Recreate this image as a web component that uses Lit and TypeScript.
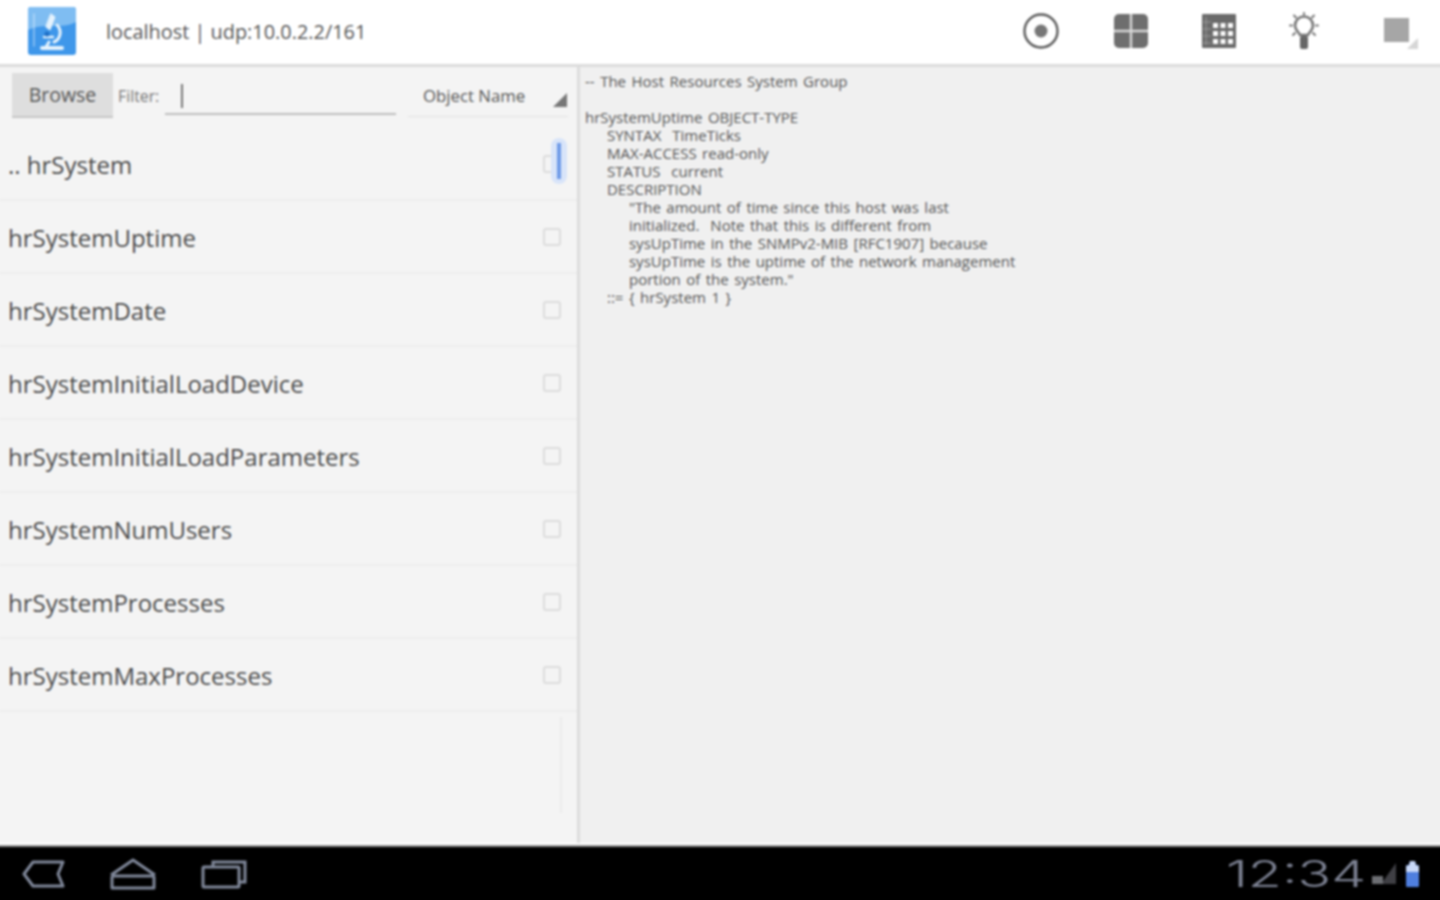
import { LitElement, html, css, svg } from "lit";
import { customElement } from "lit/decorators.js";

const ROWS = [
  ".. hrSystem",
  "hrSystemUptime",
  "hrSystemDate",
  "hrSystemInitialLoadDevice",
  "hrSystemInitialLoadParameters",
  "hrSystemNumUsers",
  "hrSystemProcesses",
  "hrSystemMaxProcesses",
];

const MIB = `-- The Host Resources System Group

hrSystemUptime OBJECT-TYPE
    SYNTAX  TimeTicks
    MAX-ACCESS read-only
    STATUS  current
    DESCRIPTION
        "The amount of time since this host was last
        initialized.  Note that this is different from
        sysUpTime in the SNMPv2-MIB [RFC1907] because
        sysUpTime is the uptime of the network management
        portion of the system."
    ::= { hrSystem 1 }`;

const appIcon = svg`<svg class="logo" width="50" height="50" viewBox="0 0 50 50">
  <rect x="1" y="1" width="48" height="48" rx="3" fill="#3f97ea"/>
  <path d="M1 4a3 3 0 0 1 3-3h42a3 3 0 0 1 3 3v12c-14 8-32 0-48 8z" fill="#7fbdf2"/>
  <g fill="none" stroke="#e6f3fd" stroke-linecap="round">
    <path d="M7 8v32" stroke-width="1.4" opacity=".55"/>
    <path d="M24 8l4 3-5 13-4-3z" fill="#e6f3fd" stroke-width="1"/>
    <path d="M30 19c5 5 4 14-3 17" stroke-width="3"/>
    <path d="M17 31h9" stroke-width="2.4"/>
    <path d="M15 42h20" stroke-width="4"/>
    <path d="M22 36l-3 5" stroke-width="3"/>
  </g>
  <circle cx="20" cy="28" r="2.6" fill="#1f6fc6"/>
</svg>`;

const recordIcon = svg`<svg width="36" height="36" viewBox="0 0 36 36">
  <circle cx="18" cy="18" r="16.5" fill="none" stroke="#5a5a5a" stroke-width="2.4"/>
  <circle cx="18" cy="18" r="6.5" fill="#777"/>
</svg>`;

const gridIcon = svg`<svg class="grid" width="34" height="34" viewBox="0 0 34 34">
  <rect width="34" height="34" rx="5" fill="#6e6e6e"/>
  <path d="M17 0v34M0 17h34" stroke="#d8d8d8" stroke-width="2.4"/>
</svg>`;

const cells: [number, number][] = [];
for (const y of [9, 17, 25]) for (const x of [11, 18.5, 26]) cells.push([x, y]);
const calendarIcon = svg`<svg width="34" height="34" viewBox="0 0 34 34">
  <rect width="34" height="34" rx="1" fill="#6a6a6a"/>
  <path d="M1 8h8M1 15h8M1 22h8M1 29h8M4 3v28" stroke="#9a9a9a" stroke-width="1" fill="none"/>
  ${cells.map(([x, y]) => svg`<rect x=${x} y=${y} width="5" height="5" fill="#fbfbfb"/>`)}
</svg>`;

const bulbIcon = svg`<svg class="bulb" width="30" height="38" viewBox="0 0 30 38">
  <g fill="none" stroke="#777" stroke-linecap="round">
    <path d="M11 23c-1-3-5-4-5-9.500a9 9 0 0 1 18 0c0 5.500-4 6.500-5 9.500z" stroke-width="2.6" stroke-linejoin="round"/>
    <path d="M15 1v1.500M5 3.500l2 2M25 3.500l-2 2M1 13.500H3M29 13.500H27M4 23l2-2M26 23l-2-2" stroke-width="2"/>
  </g>
  <rect x="11" y="24" width="8" height="13" rx="2" fill="#666"/>
</svg>`;

const overviewIcon = svg`<svg width="36" height="36" viewBox="0 0 36 36">
  <rect x="1" y="5" width="25" height="24" fill="#a6a6a6"/>
  <path d="M35 25v11H24z" fill="#d6d6d6"/>
</svg>`;

const backIcon = svg`<svg width="44" height="30" viewBox="0 0 44 30" fill="none" stroke="#80889a" stroke-width="3">
  <path d="M12 3h30l-5 12 5 12H12L3 15z" stroke-linejoin="round"/>
</svg>`;

const homeIcon = svg`<svg width="48" height="32" viewBox="0 0 48 32" fill="none" stroke="#80889a" stroke-width="3">
  <path d="M2 17L24 2l22 15M3 18h42M3 18v12h42V18" stroke-linejoin="round"/>
</svg>`;

const recentIcon = svg`<svg width="46" height="30" viewBox="0 0 46 30" fill="none" stroke="#80889a" stroke-width="3">
  <path d="M12 7V3h32v20h-6" />
  <rect x="2" y="8" width="36" height="20" rx="1"/>
</svg>`;

const signalIcon = svg`<svg width="26" height="21" viewBox="0 0 26 21">
  <path d="M25 0v21H10z" fill="#3f3f44"/>
  <rect x="1" y="13" width="11" height="8" fill="#6d6f74"/>
</svg>`;

const batteryIcon = svg`<svg width="15" height="27" viewBox="0 0 15 27">
  <path d="M5 1h5l1 4h2a1 1 0 0 1 1 1v20a1 1 0 0 1-1 1H2a1 1 0 0 1-1-1V6a1 1 0 0 1 1-1h2z" fill="#4f7fdf"/>
  <path d="M5 1h5l1 4 3 1v6H1V6l3-1z" fill="#c8d8f8"/>
</svg>`;

@customElement("app-root")
export class AppRoot extends LitElement {
  static styles = css`
    :host {
      display: block;
      width: 1440px;
      height: 900px;
      overflow: hidden;
      background: #fff;
    }
    .app {
      display: flex;
      flex-direction: column;
      width: 1448px;
      height: 908px;
      margin: -4px;
      font-family: "Open Sans", "Noto Sans", sans-serif;
      filter: blur(0.8px);
    }
    .top {
      height: 68px;
      flex: none;
      display: flex;
      align-items: center;
      padding: 4px 25px 2px 31px;
      background: #fff;
      box-sizing: border-box;
    }
    .logo { display: block; }
    .title {
      margin-left: 29px;
      font-size: 19.9px;
      color: #555;
      white-space: pre;
    }
    .actions {
      margin-left: auto;
      display: flex;
      align-items: center;
      gap: 54px;
    }
    .actions svg { display: block; }
    .actions .grid { margin-left: 1px; }
    .actions .bulb { margin-left: -1px; }
    .actions .last { margin-left: 10px; }
    .main {
      flex: 1;
      min-height: 0;
      display: flex;
      border-top: 3px solid #dcdcdc;
      border-bottom: 2px solid #fff;
    }
    .left {
      width: 581px;
      box-sizing: border-box;
      padding-left: 4px;
      flex: none;
      background: #f4f4f4;
      position: relative;
    }
    .toolbar {
      height: 61px;
      display: flex;
      align-items: flex-start;
      box-sizing: border-box;
      padding: 6px 0 0 12px;
    }
    .browse {
      width: 101px;
      height: 45px;
      box-sizing: border-box;
      background: #dedede;
      border-bottom: 2px solid #c6c6c6;
      display: flex;
      align-items: center;
      justify-content: center;
      font-size: 19.5px;
      color: #555;
    }
    .filter {
      margin: 12px 0 0 5px;
      width: 47px;
      font-size: 15.8px;
      color: #777;
    }
    .input {
      width: 231px;
      height: 36px;
      box-sizing: border-box;
      border-bottom: 2px solid #bdbdbd;
      padding: 5px 0 0 16px;
      margin-top: 6px;
    }
    .caret { width: 2px; height: 24px; background: #777; }
    .spinner {
      margin: 6px 0 0 12px;
      width: 160px;
      height: 38px;
      box-sizing: border-box;
      border-bottom: 1px solid #e2e2e2;
      position: relative;
      padding: 5px 0 0 15px;
      font-size: 16.8px;
      color: #555;
    }
    .spinner i {
      position: absolute;
      right: 1px;
      bottom: 9px;
      width: 0;
      height: 0;
      border-style: solid;
      border-width: 0 0 14px 14px;
      border-color: transparent transparent #777 transparent;
    }
    .row {
      height: 73px;
      box-sizing: border-box;
      display: flex;
      align-items: center;
      justify-content: space-between;
      padding: 0 16px 0 8px;
      border-bottom: 2px solid #ededed;
      font-size: 24px;
      color: #4a4a4a;
    }
    .label { margin-top: 2px; }
    .check {
      width: 18px;
      height: 18px;
      box-sizing: border-box;
      border: 2px solid #dcdcdc;
      border-radius: 3px;
    }
    .thumb {
      position: absolute;
      left: 555px;
      top: 71px;
      width: 16px;
      height: 46px;
      border-radius: 8px;
      background: #d8e4f9;
    }
    .thumb::after {
      content: "";
      position: absolute;
      left: 6px;
      top: 5px;
      width: 4px;
      height: 36px;
      background: #6f9be8;
    }
    .track {
      position: absolute;
      left: 564px;
      top: 650px;
      bottom: 30px;
      width: 2px;
      background: #ececec;
    }
    .right {
      flex: 1;
      min-width: 0;
      background: #f0f0f0;
      border-left: 3px solid #dcdcdc;
      padding: 5px 0 0 5px;
    }
    pre {
      margin: 0;
      font-family: "Open Sans", "Noto Sans", sans-serif;
      font-size: 15px;
      word-spacing: 1.6px;
      line-height: 18px;
      color: #555;
    }
    .nav {
      height: 59px;
      flex: none;
      background: #000;
      border-top: 2px solid #8e8e8e;
      box-sizing: border-box;
      display: flex;
      align-items: center;
      padding: 0 24px 4px 25px;
    }
    .nav svg { display: block; }
    .keys { display: flex; align-items: center; gap: 44px; }
    .status { margin-left: auto; display: flex; align-items: center; }
    .clock {
      font-family: "Inter", sans-serif;
      font-weight: 300;
      font-size: 37px;
      line-height: 1;
      color: #7c8192;
      width: 135px;
      text-align: left;
      white-space: pre;
      transform: scaleX(1.5);
      transform-origin: left center;
    }
    .signal { margin-left: 10px; }
    .battery { margin-left: 8px; }
  `;

  render() {
    return html`
      <div class="app">
        <div class="top">
          ${appIcon}
          <div class="title">localhost | udp:10.0.2.2/161</div>
          <div class="actions">
            ${recordIcon}${gridIcon}${calendarIcon}${bulbIcon}
            <div class="last">${overviewIcon}</div>
          </div>
        </div>
        <div class="main">
          <div class="left">
            <div class="toolbar">
              <div class="browse">Browse</div>
              <div class="filter">Filter:</div>
              <div class="input"><div class="caret"></div></div>
              <div class="spinner">Object Name<i></i></div>
            </div>
            ${ROWS.map(
              (r) => html`<div class="row"><span class="label">${r}</span><span class="check"></span></div>`
            )}
            <div class="thumb"></div>
            <div class="track"></div>
          </div>
          <div class="right"><pre>${MIB}</pre></div>
        </div>
        <div class="nav">
          <div class="keys">${backIcon}${homeIcon}${recentIcon}</div>
          <div class="status">
            <div class="clock">12:34</div>
            <div class="signal">${signalIcon}</div>
            <div class="battery">${batteryIcon}</div>
          </div>
        </div>
      </div>
    `;
  }
}
